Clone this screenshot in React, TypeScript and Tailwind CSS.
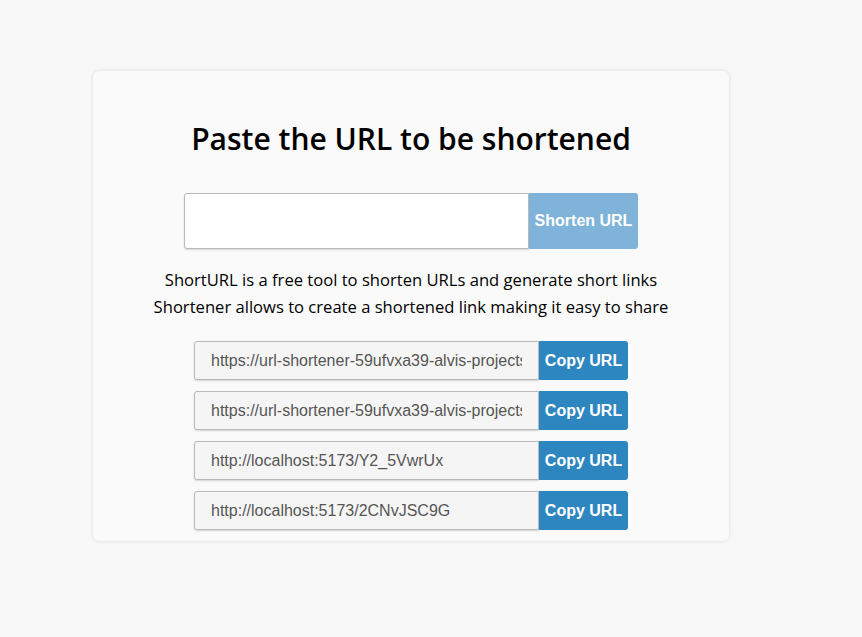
import React, { useState } from "react";

const links = [
  "https://url-shortener-59ufvxa39-alvis-projects.vercel.app/abc123",
  "https://url-shortener-59ufvxa39-alvis-projects.vercel.app/xyz789",
  "http://localhost:5173/Y2_5VwrUx",
  "http://localhost:5173/2CNvJSC9G",
];

const App = () => {
  const [url, setUrl] = useState("");

  return (
    <div className="min-h-[637px] bg-[#f8f8f8] pt-[71px] pl-[93px]">
      <div className="w-[636px] h-[470px] bg-[#fafafa] rounded-md shadow-[0_0_4px_rgba(0,0,0,0.12)] flex flex-col items-center pt-[48px]">
        <h1
          className="text-[30px] leading-[40px] font-semibold text-black"
          style={{ fontFamily: '"Open Sans", "Noto Sans", sans-serif' }}
        >
          Paste the URL to be shortened
        </h1>

        {/* input + shorten button */}
        <div className="flex mt-[34px]">
          <input
            value={url}
            onChange={(e) => setUrl(e.target.value)}
            className="w-[345px] h-[56px] bg-white border border-[#b9b9b9] rounded-l-[3px] shadow-[0_1px_2px_rgba(0,0,0,0.15)] outline-none px-3"
          />
          <button
            className="w-[109px] h-[56px] bg-[#7fb3d9] text-white font-bold text-[16px] rounded-r-[3px]"
            style={{ fontFamily: '"Liberation Sans", Arial, sans-serif' }}
          >
            Shorten URL
          </button>
        </div>

        <div
          className="mt-[17px] text-center text-[16.6px] leading-[27px] text-black"
          style={{ fontFamily: '"Open Sans", "Noto Sans", sans-serif' }}
        >
          <p>ShortURL is a free tool to shorten URLs and generate short links</p>
          <p>Shortener allows to create a shortened link making it easy to share</p>
        </div>

        <div className="flex flex-col gap-[11px] mt-[21px]">
          {links.map((l) => (
            <div key={l} className="flex">
              <input
                readOnly
                value={l}
                className="w-[345px] h-[39px] bg-[#f5f5f5] border border-[#b9b9b9] rounded-l-[3px] shadow-[0_1px_2px_rgba(0,0,0,0.15)] outline-none pl-[16px] pr-[16px] text-[16px] text-[#555]"
                style={{ fontFamily: '"Liberation Sans", Arial, sans-serif' }}
              />
              <button
                className="w-[89px] h-[39px] bg-[#2e86c1] text-white font-bold text-[16px] rounded-r-[3px]"
                style={{ fontFamily: '"Liberation Sans", Arial, sans-serif' }}
              >
                Copy URL
              </button>
            </div>
          ))}
        </div>
      </div>
    </div>
  );
};

export default App;
